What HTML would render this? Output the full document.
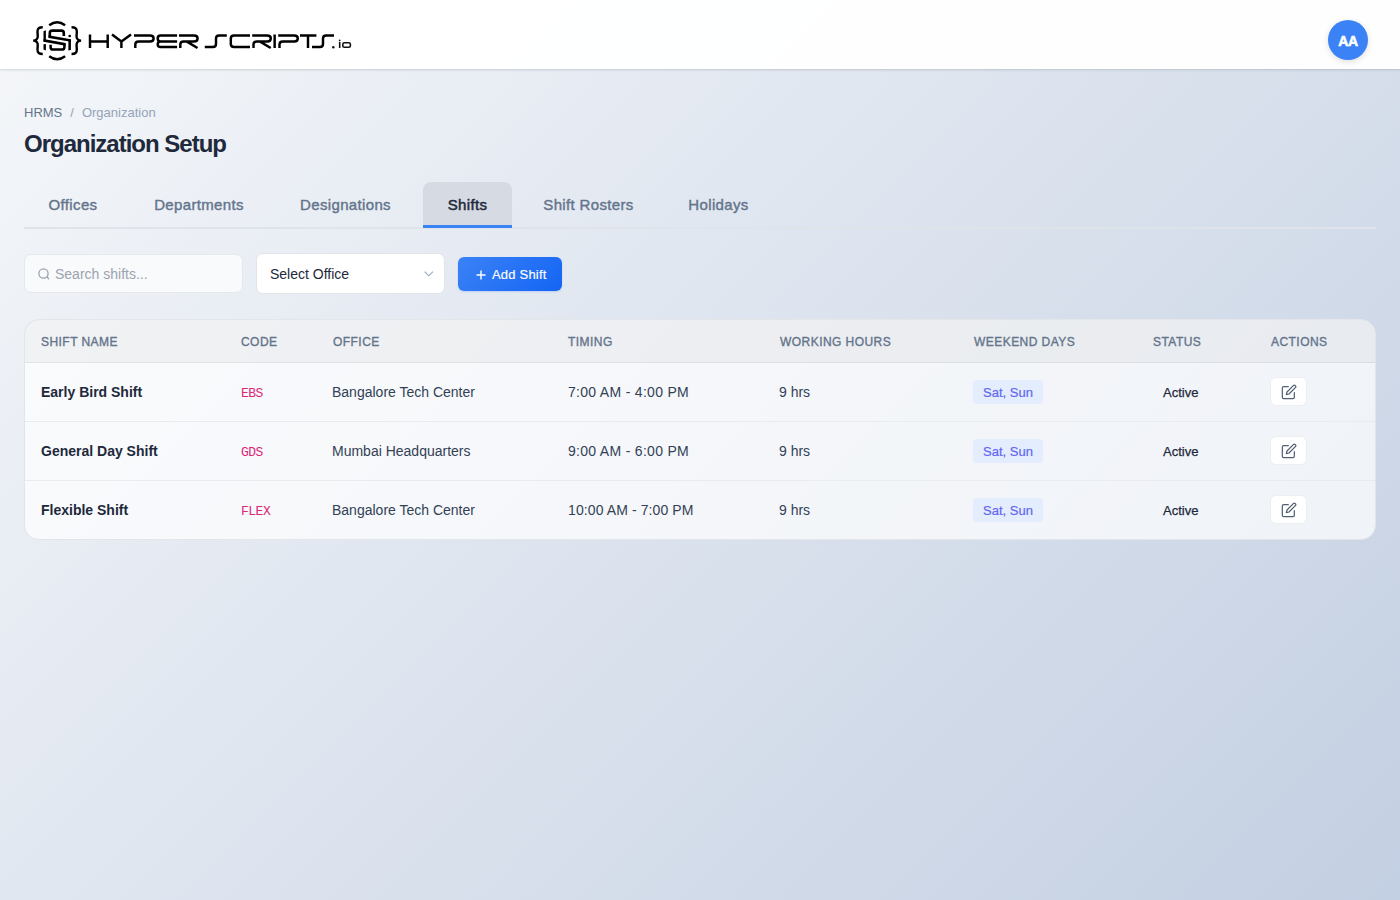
<!DOCTYPE html>
<html>
<head>
<meta charset="utf-8">
<style>
*{box-sizing:border-box;margin:0;padding:0}
html,body{width:1400px;height:900px;overflow:hidden}
body{font-family:"Liberation Sans",sans-serif;background:linear-gradient(135deg,#f5f7fa 0%,#c3cfe2 100%);position:relative;color:#1e293b}
.hdr{position:absolute;left:0;top:0;width:1400px;height:69px;background:rgba(255,255,255,0.96);box-shadow:0 1px 3px rgba(0,0,0,0.1),0 1px 1px rgba(0,0,0,0.04)}
.logo{position:absolute;left:0;top:0}
.avatar{position:absolute;left:1328px;top:20.4px;width:40px;height:40px;-webkit-text-stroke:0.6px #fff;letter-spacing:-0.4px;border-radius:50%;background:#3b82f6;color:#fff;font-weight:bold;font-size:14px;text-align:center;line-height:42px;box-shadow:0 2px 6px rgba(0,0,0,0.12)}
.crumb{position:absolute;left:24px;top:105px;font-size:13px;color:#64748b;white-space:nowrap}
.crumb .sep{color:#94a3b8;margin:0 8px}
.crumb .cur{color:#94a3b8}
h1{position:absolute;left:24px;top:130px;font-size:24px;font-weight:bold;color:#1e293b;letter-spacing:-1px;white-space:nowrap}
.tabs{position:absolute;left:24px;top:182px;width:1352px;height:47px;border-bottom:2px solid #dfe3ea}
.tab{position:absolute;top:0;height:45px;font-size:15px;font-weight:normal;-webkit-text-stroke:0.4px currentColor;letter-spacing:0.35px;color:#64748b;text-align:center;line-height:46px;white-space:nowrap}
.tab.active{background:#d6dae2;border-radius:8px 8px 0 0;color:#1e293b;height:46px;-webkit-text-stroke:0.5px currentColor}
.tab.active:after{content:"";position:absolute;left:0;right:0;top:43px;height:3px;background:#3b82f6}
.search{position:absolute;left:24px;top:254px;width:219px;height:39px;background:#f8fafc;border:1px solid #e6e8ec;border-radius:7px}
.search svg{position:absolute;left:13px;top:13px}
.search span{position:absolute;left:30px;top:11px;font-size:14px;color:#9ca3af;white-space:nowrap}
.select{position:absolute;left:256px;top:253px;width:189px;height:41px;background:#fff;border:1px solid #e3e4e7;border-radius:7px}
.select span{position:absolute;left:13px;top:12px;font-size:14px;color:#1e293b;white-space:nowrap}
.select svg{position:absolute;left:167px;top:17px}
.btn{position:absolute;left:458px;top:257px;width:104px;height:34px;border-radius:6px;background:linear-gradient(135deg,#3b82f6,#1465f4);color:#fff;font-size:13px;box-shadow:0 1px 2px rgba(37,99,235,0.2)}
.btn svg{position:absolute;left:17.5px;top:13px}
.btn span{position:absolute;left:34px;top:10px;letter-spacing:0.2px;-webkit-text-stroke:0.15px #fff;white-space:nowrap}
.card{position:absolute;left:24px;top:319px;width:1352px;height:221px;border-radius:15px;background:rgba(255,255,255,0.7);border:1px solid #e3e5e9;overflow:hidden}
.thead{position:absolute;left:0;top:0;width:100%;height:43px;background:rgba(0,0,0,0.035);border-bottom:1px solid rgba(0,0,0,0.06)}
.th{position:absolute;top:15px;font-size:12px;font-weight:normal;-webkit-text-stroke:0.35px currentColor;color:#64748b;letter-spacing:0.45px;white-space:nowrap}
.row{position:absolute;left:0;width:100%;height:59px;border-bottom:1px solid #e8ebf0}
.td{position:absolute;top:21px;font-size:14px;color:#334155;white-space:nowrap}
.td.name{font-weight:bold;color:#1e293b}
.td.code{font-family:"Liberation Mono",monospace;font-size:13px;letter-spacing:-0.5px;color:#db2777;top:23px}
.td.time{letter-spacing:0.3px}
.badge{position:absolute;left:948px;top:17px;width:70px;height:24px;border-radius:4px;background:#e4edfd;color:#6366f1;font-size:13px;text-align:center;line-height:26px;-webkit-text-stroke:0.2px currentColor}
.td.status{font-size:13px;color:#1e293b;top:22px;-webkit-text-stroke:0.25px currentColor}
.edit{position:absolute;left:1245px;top:14px;width:37px;height:29px;border-radius:6px;background:#fff;border:1px solid #eceef2}
.edit svg{position:absolute;left:10px;top:6px}
</style>
</head>
<body>
<div class="hdr">
  <svg class="logo" width="400" height="70" viewBox="0 0 400 70">
<g fill="none" stroke="#000" stroke-width="2.4">
<path d="M42.75,27.3 C39.25,27.3 37.25,28.3 37.5,32 L37.75,36 C38,39 36,40.5 33.2,40.6 C36,40.75 38,42.25 37.75,45.25 L37.5,49.25 C37.25,53 39.25,54 42.75,54"/>
<path d="M71.55,27.3 C75.05,27.3 77.05,28.3 76.8,32 L76.55,36 C76.3,39 78.3,40.5 81.1,40.6 C78.3,40.75 76.3,42.25 76.55,45.25 L76.8,49.25 C77.05,53 75.05,54 71.55,54"/>
<path d="M49.2,25.3 Q57.15,19.2 65.1,25.3"/>
<path d="M49.2,56.2 Q57.15,62.2 65.1,56.2"/>
<path stroke-width="2.6" d="M63.8,36 L63.8,33 Q63.8,30.6 61.4,30.6 L52.2,30.6 Q49.8,30.6 49.8,33 L49.8,37.5"/>
<path stroke-width="2.5" d="M64.4,43.5 L64.4,47.2 Q64.4,49.6 62,49.6 L53,49.6 Q50.6,49.6 50.6,47.2 L50.6,44.8"/>
</g>
<g fill="#000">
<polygon points="48.5,35.3 70.9,39.2 70.9,41.8 48.5,37.9"/>
<polygon points="68.4,39.6 70.9,39.2 70.9,50 68.4,50.6"/>
<polygon points="43.5,31.2 45.9,30.2 45.9,41.9 43.5,41.5"/>
<polygon points="43.5,39.1 65.6,43.1 65.6,45.7 43.5,41.7"/>
<polygon points="43.5,44.2 45.9,44.0 45.9,50.4 43.5,49.6"/>
<circle cx="69.7" cy="36" r="1.3"/>
</g>
<g fill="none" stroke="#000" stroke-width="2.45" stroke-linejoin="round">
<path d="M90,34.5 V48 M107.7,34.5 V48 M90,41.4 H107.7"/>
<path d="M112,34.5 L121.4,41.6 L131,34.5 M121.4,41 V48"/>
<path d="M134,35.5 H150 Q153.6,35.5 153.6,38.45 Q153.6,41.4 150,41.4 H138.5 Q135.3,41.4 135.3,44.5 V48"/>
<path d="M177.1,35.5 H160.5 Q157.7,35.5 157.7,38.45 Q157.7,41.4 160.5,41.4 H177.1 M160.5,41.4 Q157.7,41.4 157.7,44.2 Q157.7,47 160.5,47 H177.1"/>
<path d="M179,35.5 H194 Q197.6,35.5 197.6,38.45 Q197.6,41.4 194,41.4 H183.5 Q180.3,41.4 180.3,44.5 V48 M186.5,41.4 L197.5,48"/>
<path d="M204.8,47 H213 Q216,47 216,44 V38.5 Q216,35.5 219,35.5 H226.8"/>
<path d="M250,35.5 H234 Q230.8,35.5 230.8,38.5 V44 Q230.8,47 234,47 H250"/>
<path d="M252.2,35.5 H267.2 Q270.8,35.5 270.8,38.45 Q270.8,41.4 267.2,41.4 H256.7 Q253.5,41.4 253.5,44.5 V48 M259.7,41.4 L270.7,48"/>
<path d="M274.65,34.5 V48"/>
<path d="M278.2,35.5 H294.2 Q297.8,35.5 297.8,38.45 Q297.8,41.4 294.2,41.4 H282.7 Q279.5,41.4 279.5,44.5 V48"/>
<path d="M300,35.5 H316.4 M308,35.5 V48"/>
<path d="M312,47 H320 Q323,47 323,44 V38.5 Q323,35.5 326,35.5 H334"/>
</g>
<circle cx="333.3" cy="47.2" r="1.2" fill="#111"/>
<path d="M339.7,42 V48" stroke="#111" stroke-width="1.6"/>
<circle cx="339.7" cy="40.4" r="0.85" fill="#111"/>
<rect x="342.8" y="42.8" width="7.6" height="4.5" rx="1.6" fill="none" stroke="#111" stroke-width="1.6"/>
</svg>
  <div class="avatar">AA</div>
</div>

<div class="crumb">HRMS<span class="sep">/</span><span class="cur">Organization</span></div>
<h1>Organization Setup</h1>

<div class="tabs">
  <div class="tab" style="left:0;width:98px">Offices</div>
  <div class="tab" style="left:106px;width:138px">Departments</div>
  <div class="tab" style="left:252px;width:139px">Designations</div>
  <div class="tab active" style="left:399px;width:89px">Shifts</div>
  <div class="tab" style="left:496px;width:137px">Shift Rosters</div>
  <div class="tab" style="left:641px;width:107px">Holidays</div>
</div>

<div class="search">
  <svg width="12" height="12" viewBox="0 0 12 12"><circle cx="5.5" cy="5.5" r="4.6" fill="none" stroke="#9ca3af" stroke-width="1.3"/><path d="M8.9 8.9L10.7 10.7" stroke="#9ca3af" stroke-width="1.3" stroke-linecap="round"/></svg>
  <span>Search shifts...</span>
</div>
<div class="select">
  <span>Select Office</span>
  <svg width="10" height="6" viewBox="0 0 10 6"><path d="M0.6 0.6L4.8 4.8L9 0.6" fill="none" stroke="#9aa6b6" stroke-width="1.1"/></svg>
</div>
<div class="btn">
  <svg width="10" height="10" viewBox="0 0 10 10"><path d="M5 0.5V9.5M0.5 5H9.5" stroke="#fff" stroke-width="1.4"/></svg>
  <span>Add Shift</span>
</div>

<div class="card">
  <div class="thead">
    <div class="th" style="left:16px">SHIFT NAME</div>
    <div class="th" style="left:216px">CODE</div>
    <div class="th" style="left:308px">OFFICE</div>
    <div class="th" style="left:543px">TIMING</div>
    <div class="th" style="left:755px">WORKING HOURS</div>
    <div class="th" style="left:949px">WEEKEND DAYS</div>
    <div class="th" style="left:1128px">STATUS</div>
    <div class="th" style="left:1246px">ACTIONS</div>
  </div>
  <div class="row" style="top:43px">
    <div class="td name" style="left:16px">Early Bird Shift</div>
    <div class="td code" style="left:216px">EBS</div>
    <div class="td" style="left:307px">Bangalore Tech Center</div>
    <div class="td time" style="left:543px">7:00 AM - 4:00 PM</div>
    <div class="td" style="left:754px">9 hrs</div>
    <div class="badge">Sat, Sun</div>
    <div class="td status" style="left:1138px">Active</div>
    <div class="edit"><svg width="16" height="16" viewBox="0 0 24 24" fill="none" stroke="#526075" stroke-width="1.85" stroke-linecap="round" stroke-linejoin="round"><path d="M11 4H4a2 2 0 0 0-2 2v14a2 2 0 0 0 2 2h14a2 2 0 0 0 2-2v-7"/><path d="M18.5 2.5a2.121 2.121 0 0 1 3 3L12 15l-4 1 1-4 9.5-9.5z"/></svg></div>
  </div>
  <div class="row" style="top:102px">
    <div class="td name" style="left:16px">General Day Shift</div>
    <div class="td code" style="left:216px">GDS</div>
    <div class="td" style="left:307px">Mumbai Headquarters</div>
    <div class="td time" style="left:543px">9:00 AM - 6:00 PM</div>
    <div class="td" style="left:754px">9 hrs</div>
    <div class="badge">Sat, Sun</div>
    <div class="td status" style="left:1138px">Active</div>
    <div class="edit"><svg width="16" height="16" viewBox="0 0 24 24" fill="none" stroke="#526075" stroke-width="1.85" stroke-linecap="round" stroke-linejoin="round"><path d="M11 4H4a2 2 0 0 0-2 2v14a2 2 0 0 0 2 2h14a2 2 0 0 0 2-2v-7"/><path d="M18.5 2.5a2.121 2.121 0 0 1 3 3L12 15l-4 1 1-4 9.5-9.5z"/></svg></div>
  </div>
  <div class="row" style="top:161px;border-bottom:none">
    <div class="td name" style="left:16px">Flexible Shift</div>
    <div class="td code" style="left:216px">FLEX</div>
    <div class="td" style="left:307px">Bangalore Tech Center</div>
    <div class="td time" style="left:543px;letter-spacing:0.1px">10:00 AM - 7:00 PM</div>
    <div class="td" style="left:754px">9 hrs</div>
    <div class="badge">Sat, Sun</div>
    <div class="td status" style="left:1138px">Active</div>
    <div class="edit"><svg width="16" height="16" viewBox="0 0 24 24" fill="none" stroke="#526075" stroke-width="1.85" stroke-linecap="round" stroke-linejoin="round"><path d="M11 4H4a2 2 0 0 0-2 2v14a2 2 0 0 0 2 2h14a2 2 0 0 0 2-2v-7"/><path d="M18.5 2.5a2.121 2.121 0 0 1 3 3L12 15l-4 1 1-4 9.5-9.5z"/></svg></div>
  </div>
</div>
</body>
</html>
